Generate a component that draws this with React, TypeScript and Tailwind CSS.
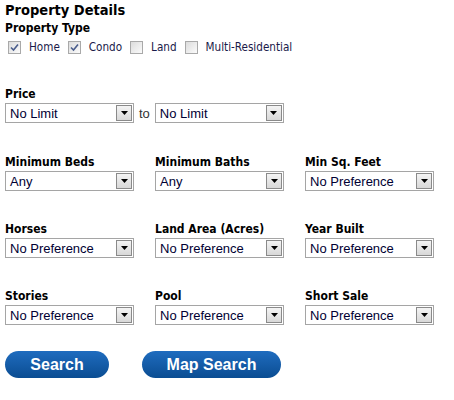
import React from "react";

const Check = ({ checked, label }: { checked?: boolean; label: string }) => {
  return (
    <label className="flex items-center">
      <span className="ml-[3px] mr-[8px] flex h-[13px] w-[13px] items-center justify-center border border-[#a9a9a9] bg-gradient-to-br from-[#dcdcdc] to-[#fbfbfb]">
        {checked && (
          <svg width="9" height="9" viewBox="0 0 9 9">
            <path d="M1 4.5 L3.5 7 L8 1.5" fill="none" stroke="#4a5d8c" strokeWidth="1.6" />
          </svg>
        )}
      </span>
      <span className="text-[#1a1a4a]">{label}</span>
    </label>
  );
};

const Select = ({ value }: { value: string }) => {
  return (
    <div className="flex h-[20px] w-[129px] shrink-0 items-center border border-[#a5a5a5] bg-white pl-[4px] pr-[1px]">
      <span className="flex-1 font-['Liberation_Sans',sans-serif] text-[13px] leading-none text-[#000033]">
        {value}
      </span>
      <span className="flex h-[16px] w-[16px] items-center justify-center border border-[#8a8a8a] bg-gradient-to-b from-[#f4f4f4] to-[#d8d8d8]">
        <svg width="7" height="4" viewBox="0 0 7 4">
          <path d="M0 0 H7 L3.5 4 Z" fill="#000" />
        </svg>
      </span>
    </div>
  );
};

const Field = ({ label, value }: { label: string; value: string }) => {
  return (
    <div className="flex w-[150px] shrink-0 flex-col gap-[2px] last:w-auto">
      <div className="text-[12px] font-bold leading-[14px] text-black">{label}</div>
      <Select value={value} />
    </div>
  );
};

export default function App() {
  return (
    <div className="h-[400px] w-[454px] overflow-hidden bg-white px-[5px] pt-[1px] font-['DejaVu_Sans_Condensed','DejaVu_Sans',sans-serif]">
      <h2 className="text-[14.5px] font-bold leading-[19px] text-black">Property Details</h2>
      <div className="mt-[1px] text-[12px] font-bold leading-[14px] text-black">Property Type</div>
      <div className="mt-[4px] flex h-[18px] items-center gap-[5px] text-[11.6px]">
        <Check checked label="Home" />
        <Check checked label="Condo" />
        <Check label="Land" />
        <Check label="Multi-Residential" />
      </div>

      <div className="mt-[30px] text-[12px] font-bold leading-[14px] text-black">Price</div>
      <div className="mt-[2px] flex h-[20px] items-center">
        <Select value="No Limit" />
        <span className="mx-[5px] font-['Liberation_Sans',sans-serif] text-[13px] leading-none text-[#333]">to</span>
        <Select value="No Limit" />
      </div>

      <div className="mt-[32px] flex flex-col gap-[31px]">
        <div className="flex">
          <Field label="Minimum Beds" value="Any" />
          <Field label="Minimum Baths" value="Any" />
          <Field label="Min Sq. Feet" value="No Preference" />
        </div>
        <div className="flex">
          <Field label="Horses" value="No Preference" />
          <Field label="Land Area (Acres)" value="No Preference" />
          <Field label="Year Built" value="No Preference" />
        </div>
        <div className="flex">
          <Field label="Stories" value="No Preference" />
          <Field label="Pool" value="No Preference" />
          <Field label="Short Sale" value="No Preference" />
        </div>
      </div>

      <div className="mt-[26px] flex gap-[33px]">
        <button className="h-[27px] w-[104px] rounded-full bg-gradient-to-b from-[#1f6cbf] to-[#0a4d92] font-['Liberation_Sans',sans-serif] text-[16px] font-bold text-white">
          Search
        </button>
        <button className="h-[27px] w-[139px] rounded-full bg-gradient-to-b from-[#1f6cbf] to-[#0a4d92] font-['Liberation_Sans',sans-serif] text-[16px] font-bold text-white">
          Map Search
        </button>
      </div>
    </div>
  );
}
